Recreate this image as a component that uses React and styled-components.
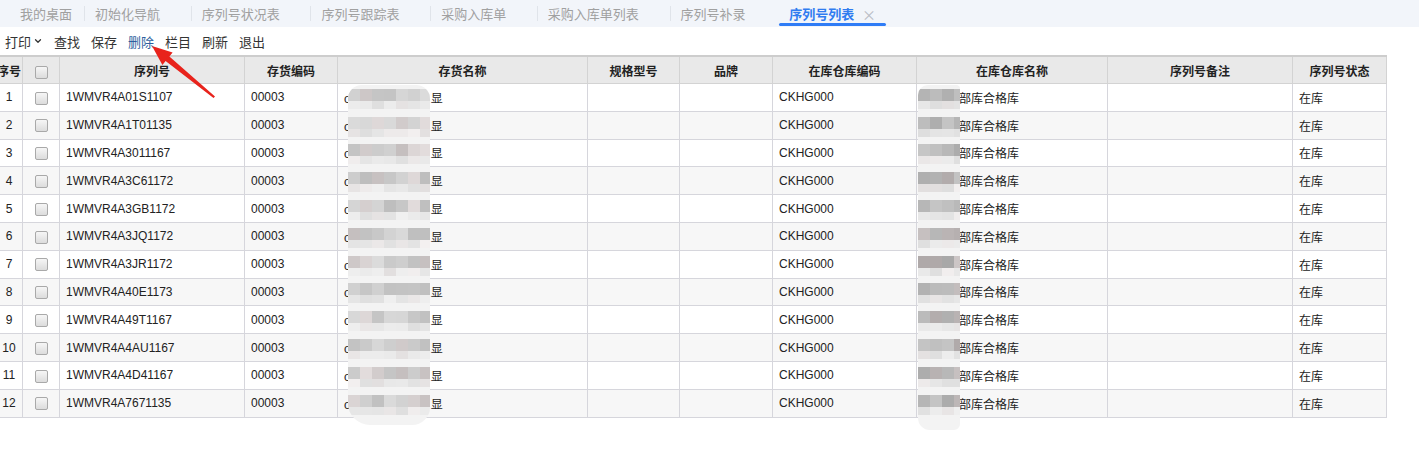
import React from 'react';
import styled, { createGlobalStyle } from 'styled-components';
import { ChevronDown } from 'lucide-react';

const GlobalStyle = createGlobalStyle`
  html, body { margin: 0; padding: 0; background: #fff; }
  body {
    font-family: "Liberation Sans", Arial, "Noto Sans CJK SC", sans-serif;
    color: #333;
    overflow: hidden;
  }
`;

const Page = styled.div`
  position: relative;
  width: 1419px;
  height: 462px;
  overflow: hidden;
  background: #fff;
`;

const TabBar = styled.div`
  height: 27px;
  background: #f2f5fa;
  display: flex;
  align-items: stretch;
  padding-left: 10px;
`;

const Tab = styled.div`
  position: relative;
  display: flex;
  align-items: center;
  flex: none;
  padding: 0 ${p => (p.$first ? 13 : 10)}px 0 10px;
  margin-left: ${p => (p.$active ? 2 : 0)}px;
  font-size: 13px;
  font-family: "Noto Sans CJK SC", sans-serif;
  color: ${p => (p.$active ? '#2f7cf0' : '#a0a0a0')};
  font-weight: ${p => (p.$active ? 700 : 400)};
  white-space: nowrap;
  &::after {
    content: '';
    display: ${p => (p.$sep ? 'block' : 'none')};
    position: absolute;
    right: 0;
    top: 6px;
    bottom: 6px;
    width: 1px;
    background: #e0e4ea;
  }
  &::before {
    content: '';
    display: ${p => (p.$active ? 'block' : 'none')};
    position: absolute;
    left: 0;
    right: 0;
    bottom: 1px;
    height: 3px;
    border-radius: 2px;
    background: #2f7cf6;
  }
`;

const CloseSlot = styled.span`
  display: inline-flex;
  justify-content: flex-end;
  flex: none;
  width: 21.7px;
  font-size: 14px;
  font-weight: 400;
  color: #b8bcc4;
  line-height: 1;
`;

const Toolbar = styled.div`
  height: 28px;
  display: flex;
  align-items: center;
  gap: 11px;
  padding-left: 5px;
  font-size: 13px;
  font-family: "Noto Sans CJK SC", sans-serif;
`;

const ToolItem = styled.span`
  display: inline-flex;
  align-items: center;
  color: ${p => (p.$hot ? '#2d5f9e' : '#333')};
  svg { margin-left: 2px; }
`;

const TableWrap = styled.div`
  margin-left: -5px;
`;

const Grid = styled.table`
  border-collapse: collapse;
  table-layout: fixed;
  width: 1391px;
  border-top: 2px solid #cdcdcd;
  font-size: 12px;
`;

const HeadCell = styled.th`
  height: 26px;
  padding: 0;
  background: #e9e9e9;
  border: 1px solid #d3d3d3;
  border-top: none;
  font-weight: 700;
  color: #222;
  font-family: "Noto Sans CJK SC", sans-serif;
  font-size: 12px;
  text-align: center;
  white-space: nowrap;
  overflow: hidden;
`;

const Row = styled.tr`
  background: ${p => (p.$alt ? '#f7f7f7' : '#fff')};
`;

const Cell = styled.td`
  height: 26.8px;
  padding: 0 6px;
  border: 1px solid #d6d6dc;
  text-align: ${p => (p.$center ? 'center' : 'left')};
  color: #222;
  white-space: nowrap;
  overflow: hidden;
  font-family: "Liberation Sans", Arial, "Noto Sans CJK SC", sans-serif;
`;

const Check = styled.span`
  display: inline-block;
  width: 11px;
  height: 11px;
  border: 1px solid #a9a9a9;
  border-radius: 2px;
  background: linear-gradient(#f6f6f6, #dcdcdc);
  vertical-align: middle;
`;

const Gap = styled.span`
  display: inline-block;
  width: ${p => p.$w}px;
`;

const Blob = styled.div`
  position: absolute;
  left: ${p => p.$left}px;
  top: ${p => p.$top}px;
  width: ${p => p.$width}px;
  height: ${p => p.$height}px;
  background: #f3f3f3;
  border-radius: ${p => p.$radius};
  display: flex;
  flex-direction: column;
  overflow: hidden;
`;

const BlobRow = styled.div`
  height: 27.8px;
  flex: none;
  display: flex;
  flex-direction: column;
  justify-content: center;
`;

const Strip = styled.div`
  display: flex;
  height: ${p => p.$h}px;
`;

const Pix = styled.span`
  flex: none;
  width: ${p => p.$w}px;
  height: 100%;
`;

const Arrow = styled.svg`
  position: absolute;
  left: 0;
  top: 0;
  pointer-events: none;
`;

const tabs = [
  { t: '我的桌面', first: true, sep: true },
  { t: '初始化导航', sep: true },
  { t: '序列号状况表', sep: true },
  { t: '序列号跟踪表', sep: true },
  { t: '采购入库单', sep: true },
  { t: '采购入库单列表', sep: true },
  { t: '序列号补录' },
  { t: '序列号列表', active: true },
];

const tools = ['查找', '保存', '删除', '栏目', '刷新', '退出'];

const serials = [
  '1WMVR4A01S1107', '1WMVR4A1T01135', '1WMVR4A3011167', '1WMVR4A3C61172',
  '1WMVR4A3GB1172', '1WMVR4A3JQ1172', '1WMVR4A3JR1172', '1WMVR4A40E1173',
  '1WMVR4A49T1167', '1WMVR4A4AU1167', '1WMVR4A4D41167', '1WMVR4A7671135',
];

const cols = [27, 37, 185, 93, 250, 92, 93, 144, 191, 185, 94];
const heads = ['序号', '', '序列号', '存货编码', '存货名称', '规格型号', '品牌', '在库仓库编码', '在库仓库名称', '序列号备注', '序列号状态'];

function rand(seed) {
  let s = seed;
  return () => {
    s = (s * 9301 + 49297) % 233280;
    return s / 233280;
  };
}

function grays(seed, n, lo, hi, tint) {
  const r = rand(seed);
  return Array.from({ length: n }, () => {
    const v = Math.round(lo + r() * (hi - lo));
    const t = r() < 0.3 ? tint : 0;
    return `rgb(${v + t},${v},${v})`;
  });
}

function MosaicBlob({ left, top, width, height, radius, seed, lo, hi, blocks }) {
  return (
    <Blob $left={left} $top={top} $width={width} $height={height} $radius={radius}>
      {serials.map((_, i) => {
        const main = grays(seed + i * 7, blocks.length, lo, hi, 6);
        const light = grays(seed + i * 13 + 3, blocks.length, 222, 240, 3);
        return (
          <BlobRow key={i}>
            <Strip $h={12}>
              {blocks.map((w, j) => <Pix key={j} $w={w} style={{ background: main[j] }} />)}
            </Strip>
            <Strip $h={8}>
              {blocks.map((w, j) => <Pix key={j} $w={w} style={{ background: light[j] }} />)}
            </Strip>
          </BlobRow>
        );
      })}
    </Blob>
  );
}

export default function App() {
  return (
    <Page>
      <GlobalStyle />
      <TabBar>
        {tabs.map(tab => (
          <Tab key={tab.t} $first={tab.first} $sep={tab.sep} $active={tab.active}>
            {tab.t}
            {!tab.first && <CloseSlot>{tab.active ? '×' : ''}</CloseSlot>}
          </Tab>
        ))}
      </TabBar>
      <Toolbar>
        <ToolItem>打印<ChevronDown size={10} strokeWidth={3} /></ToolItem>
        {tools.map(t => (
          <ToolItem key={t} $hot={t === '删除'}>{t}</ToolItem>
        ))}
      </Toolbar>
      <TableWrap>
        <Grid>
          <colgroup>
            {cols.map((w, i) => <col key={i} style={{ width: w }} />)}
          </colgroup>
          <thead>
            <tr>
              {heads.map((h, i) => (
                <HeadCell key={i}>{i === 1 ? <Check /> : h}</HeadCell>
              ))}
            </tr>
          </thead>
          <tbody>
            {serials.map((s, i) => (
              <Row key={s} $alt={i % 2 === 1}>
                <Cell $center>{i + 1}</Cell>
                <Cell $center><Check /></Cell>
                <Cell>{s}</Cell>
                <Cell>00003</Cell>
                <Cell>oc<Gap $w={74} />显</Cell>
                <Cell />
                <Cell />
                <Cell>CKHG000</Cell>
                <Cell><Gap $w={36} />部库合格库</Cell>
                <Cell />
                <Cell>在库</Cell>
              </Row>
            ))}
          </tbody>
        </Grid>
      </TableWrap>
      <MosaicBlob left={348} top={85} width={82} height={340} radius="14px 14px 18px 22px"
        seed={11} lo={190} hi={220} blocks={[12, 12, 12, 12, 12, 12, 10]} />
      <MosaicBlob left={918} top={85} width={42} height={345} radius="10px 4px 6px 12px"
        seed={29} lo={168} hi={200} blocks={[12, 12, 12, 6]} />
      <Arrow width="1419" height="462" viewBox="0 0 1419 462">
        <polygon
          points="152,46 172.6,52.6 169.4,56.5 215,96.5 213.5,98 165.6,61.1 162.4,65"
          fill="#e8231c"
        />
      </Arrow>
    </Page>
  );
}
